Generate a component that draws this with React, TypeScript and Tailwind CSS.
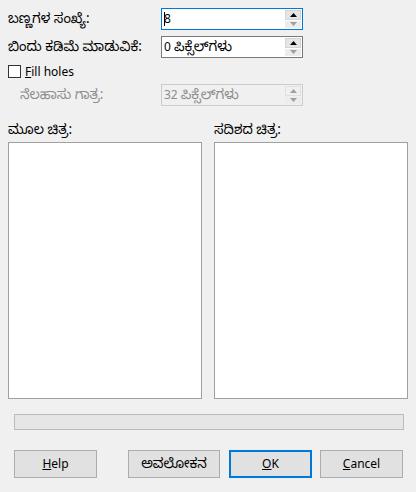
import React from "react";

const font = "font-['Noto_Sans','Noto_Sans_Kannada','Noto_Sans_CJK_SC',sans-serif]";

function Kn({ children }: { children: React.ReactNode }) {
  return <span className="text-[13.5px] leading-none">{children}</span>;
}

function Spin({
  value,
  unit,
  border,
  disabled,
  cursor,
  downDisabled,
}: {
  value: string;
  unit?: string;
  border: string;
  disabled?: boolean;
  cursor?: boolean;
  downDisabled?: boolean;
}) {
  return (
    <div
      className={`relative flex h-[22px] w-[142px] items-center border ${border} ${
        disabled ? "bg-[#f0f0f0]" : "bg-white"
      }`}
    >
      <div
        className={`flex flex-1 items-center pl-[2px] text-[12px] leading-none ${
          disabled ? "text-[#8d8d8d]" : "text-black"
        }`}
      >
        {cursor && <span className="mr-[-1px] inline-block h-[14px] w-px bg-black" />}
        <span>{value}</span>
        {unit && (
          <span className="ml-[3px]">
            <Kn>{unit}</Kn>
          </span>
        )}
      </div>
      <div className="mr-px flex h-[18px] w-[16px] flex-col gap-px">
        <div
          className={`flex flex-1 items-center justify-center border ${
            disabled ? "border-[#e0e0e0] bg-[#f0f0f0]" : "border-[#d4d4d4] bg-[#e5e5e5]"
          }`}
        >
          <svg width="7" height="4" viewBox="0 0 7 4">
            <path d="M0 4 L3.5 0 L7 4 Z" fill={disabled ? "#a0a0a0" : "#000"} />
          </svg>
        </div>
        <div
          className={`flex flex-1 items-center justify-center ${
            disabled || downDisabled ? "bg-[#ececec]" : "bg-[#e5e5e5]"
          }`}
        >
          <svg width="7" height="4" viewBox="0 0 7 4">
            <path d="M0 0 L3.5 4 L7 0 Z" fill="#a0a0a0" />
          </svg>
        </div>
      </div>
    </div>
  );
}

function Btn({
  children,
  w,
  focus,
}: {
  children: React.ReactNode;
  w: string;
  focus?: boolean;
}) {
  return (
    <div
      className={`flex h-[28px] ${w} items-center justify-center bg-[#e1e1e1] text-[12px] text-black ${
        focus ? "border-2 border-[#0078d7]" : "border border-[#adadad]"
      }`}
    >
      {children}
    </div>
  );
}

export default function App() {
  return (
    <div className={`flex h-[492px] w-[416px] flex-col bg-[#f0f0f0] text-[12px] text-black ${font}`}>
      <div className="flex flex-col px-2 pt-2">
        <div className="flex h-[22px] items-center">
          <div className="w-[153px]">
            <Kn>ಬಣ್ಣಗಳ ಸಂಖ್ಯೆ:</Kn>
          </div>
          <Spin value="8" border="border-[#0078d7]" cursor downDisabled />
        </div>
        <div className="mt-[6px] flex h-[22px] items-center">
          <div className="w-[153px]">
            <Kn>ಬಿಂದು ಕಡಿಮೆ ಮಾಡುವಿಕೆ:</Kn>
          </div>
          <Spin value="0" unit="ಪಿಕ್ಸೆಲ್‌ಗಳು" border="border-[#7a7a7a]" downDisabled />
        </div>
        <div className="mt-[7px] flex h-[13px] items-center">
          <div className="h-[13px] w-[13px] border border-[#333333] bg-white" />
          <span className="ml-[4px]">
            <span className="underline">F</span>ill holes
          </span>
        </div>
        <div className="mt-[6px] flex h-[22px] items-center">
          <div className="w-[153px] pl-[12px] text-[#8d8d8d]">
            <Kn>ನೆಲಹಾಸು ಗಾತ್ರ:</Kn>
          </div>
          <Spin value="32" unit="ಪಿಕ್ಸೆಲ್‌ಗಳು" border="border-[#cccccc]" disabled />
        </div>
        <div className="mt-[16px] flex h-[16px] items-center">
          <div className="w-[206px]">
            <Kn>ಮೂಲ ಚಿತ್ರ:</Kn>
          </div>
          <div>
            <Kn>ಸದಿಶದ ಚಿತ್ರ:</Kn>
          </div>
        </div>
        <div className="mt-[4px] flex gap-[12px]">
          <div className="h-[257px] w-[194px] border border-[#a0a0a0] bg-white" />
          <div className="h-[257px] w-[194px] border border-[#a0a0a0] bg-white" />
        </div>
      </div>
      <div className="ml-[14px] mt-[15px] h-[16px] w-[390px] border border-[#bcbcbc] bg-[#e6e6e6]" />
      <div className="ml-[14px] mt-[20px] flex">
        <Btn w="w-[83px]">
          <span>
            <span className="underline">H</span>elp
          </span>
        </Btn>
        <div className="ml-[31px]">
          <Btn w="w-[92px]">
            <Kn>ಅವಲೋಕನ</Kn>
          </Btn>
        </div>
        <div className="ml-[9px]">
          <Btn w="w-[83px]" focus>
            <span>
              <span className="underline">O</span>K
            </span>
          </Btn>
        </div>
        <div className="ml-[8px]">
          <Btn w="w-[83px]">
            <span>
              <span className="underline">C</span>ancel
            </span>
          </Btn>
        </div>
      </div>
    </div>
  );
}
